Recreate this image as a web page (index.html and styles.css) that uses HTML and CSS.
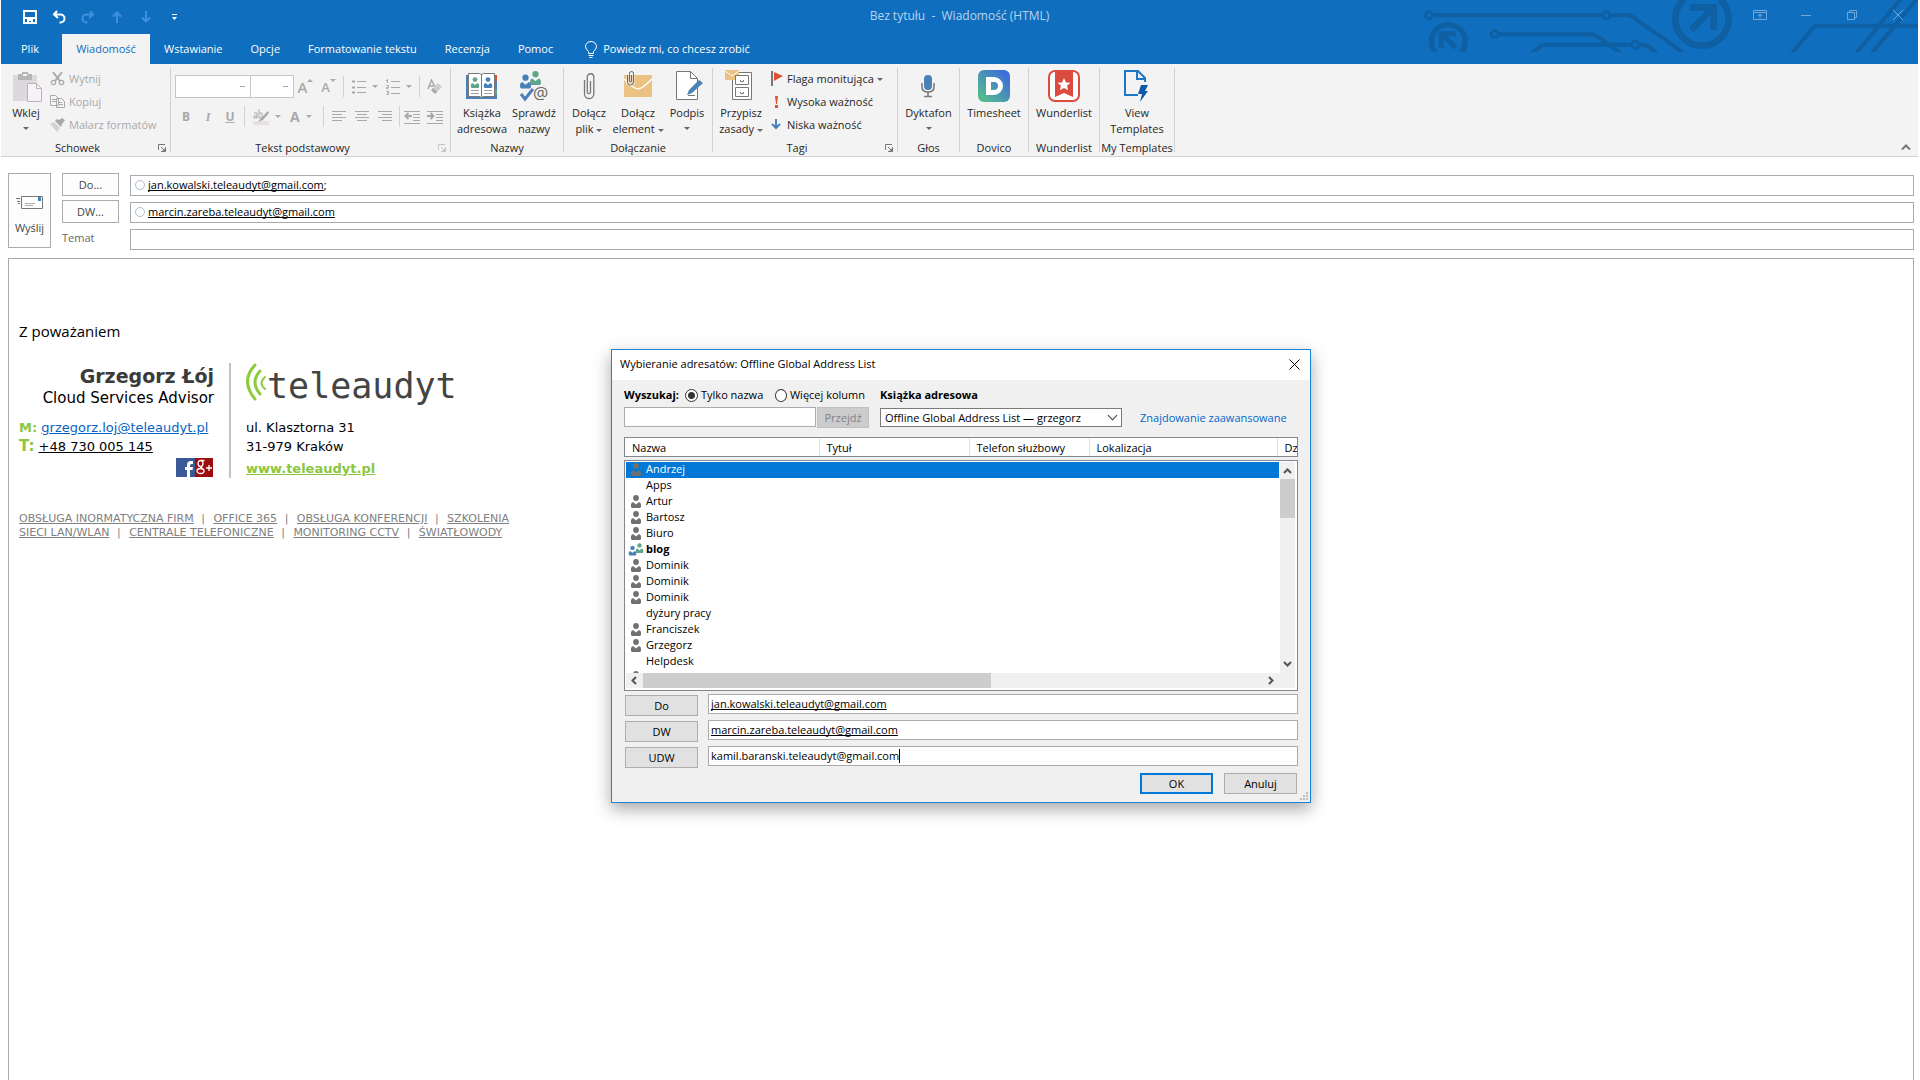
FILE: index.html
```html
<!DOCTYPE html>
<html lang="pl">
<head>
  <meta charset="UTF-8">
  <title>Bez tytułu - Wiadomość (HTML)</title>
  <link rel="stylesheet" href="styles.css">
</head>
<body>

  <!-- shared icons -->
  <svg class="sprite" aria-hidden="true">
    <symbol id="person" viewBox="0 0 12 13">
      <circle cx="6" cy="3" r="2.900"/>
      <path d="M1 12V9.500Q1 7.500 3 7L6 9.500 9 7Q11 7.500 11 9.500V12L10 13H2z"/>
    </symbol>
    <symbol id="launcher" viewBox="0 0 8 8">
      <path d="M.5 6V.5H7M3 3l3 3M7.500 3v4.500H3" fill="none" stroke="currentColor"/>
      <path d="M4 7.500h3.500V4z" fill="currentColor"/>
    </symbol>
  </svg>

  <header class="window-head">
    <svg class="circuit" viewBox="0 0 1500 192" width="500" height="64" aria-hidden="true">
      <g transform="translate(-54 0)" fill="none" stroke="#0f5fa3" stroke-width="12">
        <path d="M97 46H605M632 46H685Q692 46 700 52L850 158M297 103H575Q582 103 590 108L660 158M395 160L422 139Q430 134 440 134H692M720 134H730Q738 134 746 140L772 160"/>
        <path d="M1175 160L1240 83Q1246 77 1254 77H1560M1368 160L1502 -2M1415 160L1550 -2"/>
        <circle cx="87" cy="46" r="10.500" stroke-width="9"/>
        <circle cx="619" cy="46" r="10.500" stroke-width="9"/>
        <circle cx="284" cy="102" r="10.500" stroke-width="9"/>
        <circle cx="706" cy="134" r="10.500" stroke-width="9"/>
        <path d="M108 160A51 51 0 1 1 182 160" stroke-width="16"/>
        <path d="M167 101H124V145M126 103L167 143" stroke-width="15"/>
        <path d="M852 -2A80 80 0 1 0 960 -2" stroke-width="20"/>
        <path d="M870 22H941V90M938 25L874 90" stroke-width="20"/>
      </g>
      <path d="M0 156h1500v36H0z" fill="#106ebe"/>
    </svg>

    <div class="titlebar">
      <div class="quick-access">
        <button type="button" aria-label="Zapisz"><svg width="14" height="14" fill="none" stroke="#fff" stroke-width="2"><path d="M1 1h12v12H1zM1 8h12M5 13v-3h4v3"/></svg></button>
        <button type="button" aria-label="Cofnij"><svg width="14" height="14" fill="none" stroke="#fff" stroke-width="2"><path d="M5 1L2 4.500 6 8M2 4.500h6.500a4 4 0 0 1 0 8H7.500"/></svg></button>
        <button type="button" aria-label="Ponów" disabled><svg width="14" height="14" fill="none" stroke="#3f90dc" stroke-width="2"><path d="M9 1l3 3.500L8 8M12 4.500H5.500a4 4 0 0 0 0 8H6.500"/></svg></button>
        <button type="button" aria-label="Poprzedni" disabled><svg width="10" height="12" fill="none" stroke="#3f90dc" stroke-width="2"><path d="M5 12V2M1 5.500l4-4 4 4"/></svg></button>
        <button type="button" aria-label="Następny" disabled><svg width="10" height="12" fill="none" stroke="#3f90dc" stroke-width="2"><path d="M5 0v10M1 6.500l4 4 4-4"/></svg></button>
        <button type="button" aria-label="Dostosuj"><svg width="7" height="6" fill="#fff"><path d="M1 0h5v1H1zM1 3h5L3.500 6z"/></svg></button>
      </div>
      <div class="title">Bez tytułu &nbsp;-&nbsp; Wiadomość (HTML)</div>
      <div class="window-buttons">
        <button type="button" aria-label="Opcje wstążki"><svg width="14" height="12" fill="none" stroke="#6fa9dc"><path d="M.5 1.500h13v9H.5zM.5 3.500h13M7 9V5M5 7l2-2 2 2"/></svg></button>
        <button type="button" aria-label="Minimalizuj"><svg width="10" height="10" stroke="#6fa9dc"><path d="M0 5.500h10"/></svg></button>
        <button type="button" aria-label="Przywróć"><svg width="10" height="10" fill="none" stroke="#6fa9dc"><path d="M.5 2.500h7v7h-7zM2.500 2.500v-2h7v7h-2"/></svg></button>
        <button type="button" aria-label="Zamknij okno"><svg width="10" height="10" stroke="#6fa9dc"><path d="M0 0l10 10M10 0L0 10"/></svg></button>
      </div>
    </div>

    <nav class="tabs">
      <a href="#" class="tab file">Plik</a>
      <a href="#" class="tab active">Wiadomość</a>
      <a href="#" class="tab">Wstawianie</a>
      <a href="#" class="tab">Opcje</a>
      <a href="#" class="tab">Formatowanie tekstu</a>
      <a href="#" class="tab">Recenzja</a>
      <a href="#" class="tab">Pomoc</a>
      <a href="#" class="tab tell-me">
        <svg width="12" height="17" fill="none" stroke="#fff"><path d="M3.500 12.500V10.500Q.5 8 .5 5.500a5.500 5 0 0 1 11 0Q11.500 8 8.500 10.500V12.500zM3.500 14.500h5M4.500 16.500h3"/></svg>
        Powiedz mi, co chcesz zrobić
      </a>
    </nav>
  </header>

  <div class="ribbon">
    <section class="group clipboard">
      <div class="tools">
        <button type="button" class="big">
          <svg width="32" height="32"><path d="M3 5h24v26H3z" fill="#ddd8dd"/><path d="M8 4h4V2h6v2h4v6H8z" fill="#b5b5b5"/><path d="M13 4h4v2h-4z" fill="#f3f3f3"/><path d="M17.500 13.500h9l5 5v13h-14z" fill="#f7f2f7" stroke="#b9b4b9"/><path d="M26.500 13.500v5h5" fill="none" stroke="#b9b4b9"/></svg>
          <span>Wklej</span><i class="caret"></i>
        </button>
        <div class="stack">
          <button type="button" class="small" disabled><svg width="15" height="15" fill="none" stroke="#a9a9a9" stroke-width="2"><path d="M3 1l7 9M12 1L5 10"/><circle cx="3.500" cy="11.500" r="2.200" stroke-width="1.200"/><circle cx="11.500" cy="11.500" r="2.200" stroke-width="1.200"/></svg>Wytnij</button>
          <button type="button" class="small" disabled><svg width="15" height="15" fill="#f7f2f7" stroke="#a9a9a9"><path d="M.5 1.500h5l3 3v7h-8zM2 5.500h4M2 7.500h4M6.500 4.500h5l3 3v6h-8zM8 8.500h4M8 10.500h5"/></svg>Kopiuj</button>
          <button type="button" class="small" disabled><svg width="15" height="15"><path d="M0 7l4-2 6 6-3 4z" fill="#d5d0d5"/><path d="M5 4l6 6 1-3 3-4-3-2-3 2-2-1z" fill="#a9a9a9"/></svg>Malarz formatów</button>
        </div>
      </div>
      <div class="caption">Schowek<svg class="launch" width="8" height="8"><use href="#launcher"/></svg></div>
    </section>

    <section class="group text-group">
      <div class="tools format">
        <div class="format-row">
          <select class="font-name" aria-label="Czcionka" disabled><option></option></select>
          <select class="font-size" aria-label="Rozmiar" disabled><option></option></select>
          <button type="button" class="glyph" disabled>A<i class="caret up"></i></button>
          <button type="button" class="glyph smaller" disabled>A<i class="caret"></i></button>
          <i class="divider"></i>
          <button type="button" class="split" aria-label="Punktory" disabled><svg width="14" height="14" stroke="#a9a9a9"><path d="M5 1.500h9M5 7.500h9M5 12.500h9"/><path d="M0 1.500h3M0 7.500h3M0 12.500h3" stroke-width="2"/></svg><i class="caret"></i></button>
          <button type="button" class="split" aria-label="Numerowanie" disabled><svg width="14" height="16" stroke="#a9a9a9" fill="none"><path d="M5 2.500h9M5 8.500h9M5 14.500h9M1.500 0v4M0 1.500h1.500M.5 6.500h2v2h-2v1.500h2M.5 12.500h2v3h-2M1 14h1"/></svg><i class="caret"></i></button>
          <i class="divider gap"></i>
          <button type="button" class="glyph" aria-label="Wyczyść formatowanie" disabled><svg width="15" height="15"><path d="M1 10L4.500 1 8 8M2.500 7h4" fill="none" stroke="#a9a9a9" stroke-width="1.500"/><path d="M5 10l6-6 4 4-6 6z" fill="#d0cbd0"/><path d="M4 11l2-2 4 4-2 2z" fill="#a9a9a9"/></svg></button>
        </div>
        <div class="format-row">
          <button type="button" class="letter" disabled><b>B</b></button>
          <button type="button" class="letter" disabled><em>I</em></button>
          <button type="button" class="letter" disabled><b><u>U</u></b></button>
          <i class="divider"></i>
          <button type="button" class="split" aria-label="Kolor wyróżnienia" disabled><svg width="16" height="16"><path d="M0 12h16v4H0z" fill="#e6dfe6"/><path d="M1 4h3v5H1V7h3M6 0v9h3V4H6" fill="none" stroke="#a9a9a9"/><path d="M15 2L8 9l-3 4 5-2 6-7z" fill="#a9a9a9"/></svg><i class="caret"></i></button>
          <button type="button" class="split colour" disabled><b>A</b><i class="caret"></i></button>
          <i class="divider gap"></i>
          <button type="button" class="glyph" aria-label="Do lewej" disabled><svg width="14" height="11" stroke="#a9a9a9"><path d="M0 .5h14M0 3.500h10M0 6.500h14M0 9.500h10"/></svg></button>
          <button type="button" class="glyph" aria-label="Do środka" disabled><svg width="14" height="11" stroke="#a9a9a9"><path d="M0 .5h14M2 3.500h10M0 6.500h14M2 9.500h10"/></svg></button>
          <button type="button" class="glyph" aria-label="Do prawej" disabled><svg width="14" height="11" stroke="#a9a9a9"><path d="M0 .5h14M4 3.500h10M0 6.500h14M4 9.500h10"/></svg></button>
          <i class="divider"></i>
          <button type="button" class="glyph" aria-label="Zmniejsz wcięcie" disabled><svg width="16" height="14" stroke="#a9a9a9" fill="none"><path d="M0 1.500h16M9 4.500h7M9 7.500h7M9 10.500h7M0 13.500h16"/><path d="M8 6H2M4.500 3L1.500 6l3 3" stroke-width="2"/></svg></button>
          <button type="button" class="glyph" aria-label="Zwiększ wcięcie" disabled><svg width="16" height="14" stroke="#a9a9a9" fill="none"><path d="M0 1.500h16M9 4.500h7M9 7.500h7M9 10.500h7M0 13.500h16"/><path d="M0 6h6M3.500 3l3 3-3 3" stroke-width="2"/></svg></button>
        </div>
      </div>
      <div class="caption">Tekst podstawowy<svg class="launch faded" width="8" height="8"><use href="#launcher"/></svg></div>
    </section>

    <section class="group names">
      <div class="tools">
        <button type="button" class="big">
          <svg width="32" height="32"><path d="M0 5h31v24H0z" fill="#4a80b8"/><path d="M29 5h2v6h-2z" fill="#dd5234"/><path d="M29 19h2v6h-2z" fill="#5fa58b"/><path d="M2.500 3.500h11l2 1 2-1h11v23H18l-2.500 1-2.500-1H2.500zM15.500 4v23" fill="#fff" stroke="#777"/><use href="#person" x="4" y="7" width="10" height="11" fill="#5fa58b"/><use href="#person" x="17" y="7" width="10" height="11" fill="#4a80b8"/><path d="M5 20.500h8M5 23.500h8M18 20.500h8M18 23.500h8" stroke="#a0a0a0"/></svg>
          <span>Książka<br>adresowa</span>
        </button>
        <button type="button" class="big">
          <svg width="32" height="32"><use href="#person" x="11" y="1" width="13" height="14" fill="#5fa58b"/><use href="#person" x="1" y="4" width="13" height="15" fill="#4a80b8"/><path d="M3 24l4 5 8-10" fill="none" stroke="#4a80b8" stroke-width="3"/><text x="15" y="29" font-size="17" fill="#666">@</text></svg>
          <span>Sprawdź<br>nazwy</span>
        </button>
      </div>
      <div class="caption">Nazwy</div>
    </section>

    <section class="group attach">
      <div class="tools">
        <button type="button" class="big">
          <svg width="32" height="32" fill="none" stroke="#777" stroke-width="1.300"><path d="M17.500 11v11a1.600 1.600 0 0 1-3.200 0V7a3 3 0 0 1 6.500 0v17a4.500 4.500 0 0 1-9.300 0V10"/></svg>
          <span>Dołącz<br>plik <i class="caret"></i></span>
        </button>
        <button type="button" class="big">
          <svg width="32" height="32"><path d="M2 5h28v22H2z" fill="#eac282"/><path d="M2 9q10 10 14 10T30 9" fill="none" stroke="#fff" stroke-width="1.500"/><rect x="4" y="0" width="9" height="15" fill="#f3f3f3" opacity=".5"/><path d="M9.500 5v6a1 1 0 0 1-2 0V3.500a2 2 0 0 1 4 0V12a3 3 0 0 1-6 0V5" fill="none" stroke="#666"/></svg>
          <span>Dołącz<br>element <i class="caret"></i></span>
        </button>
        <button type="button" class="big">
          <svg width="32" height="32"><path d="M5.500 1.500h14l7 7v21h-21z" fill="#fff" stroke="#777"/><path d="M19.500 1.500v7h7" fill="none" stroke="#777"/><path d="M17 25.500h7" stroke="#777"/><path d="M16 25l2-5L28 10l4 3-11 10z" fill="#4a80b8"/></svg>
          <span>Podpis</span><i class="caret"></i>
        </button>
      </div>
      <div class="caption">Dołączanie</div>
    </section>

    <section class="group tags">
      <div class="tools">
        <button type="button" class="big">
          <svg width="32" height="32"><path d="M7.500 2.500h19v27h-19z" fill="#fff" stroke="#777"/><path d="M0 0h14v10H0z" fill="#eac282"/><path d="M0 1l7 5 7-5" fill="none" stroke="#fff"/><path d="M10.500 5.500h13v9h-13zM10.500 17.500h13v9h-13zM15.500 10v1.500h3V10M15.500 22v1.500h3V22" fill="#fff" stroke="#777"/></svg>
          <span>Przypisz<br>zasady <i class="caret"></i></span>
        </button>
        <div class="stack">
          <button type="button" class="small"><svg width="12" height="15"><path d="M1 0v15" stroke="#777" stroke-width="2"/><path d="M3 1l9 4-9 5z" fill="#dd5234"/></svg><span>Flaga monitująca <i class="caret"></i></span></button>
          <button type="button" class="small"><svg width="12" height="15" fill="#dd5234"><path d="M4 2h3l-1 8H5zM4 11h3v3H4z"/></svg>Wysoka ważność</button>
          <button type="button" class="small"><svg width="12" height="15" fill="none" stroke="#4a80b8" stroke-width="2"><path d="M5 2v9M1 7l4 4 4-4"/></svg>Niska ważność</button>
        </div>
      </div>
      <div class="caption">Tagi<svg class="launch" width="8" height="8"><use href="#launcher"/></svg></div>
    </section>

    <section class="group voice">
      <div class="tools">
        <button type="button" class="big">
          <svg width="32" height="32"><rect x="11" y="5" width="8" height="15" rx="4" fill="#4a80b8"/><path d="M9 13v4q0 5 6 5t6-5v-4M15 22v4M11 26.500h8" fill="none" stroke="#777" stroke-width="1.500"/></svg>
          <span>Dyktafon</span><i class="caret"></i>
        </button>
      </div>
      <div class="caption">Głos</div>
    </section>

    <section class="group dovico">
      <div class="tools">
        <button type="button" class="big">
          <svg width="32" height="32"><defs><linearGradient id="dv" x1="0" y1="1" x2="1" y2="0"><stop offset=".15" stop-color="#53b892"/><stop offset=".85" stop-color="#3f6fd8"/></linearGradient></defs><rect width="32" height="32" rx="6" fill="url(#dv)"/><path d="M8 7h8a9 9 0 0 1 0 18H8zM13 12v8h3a4 4 0 0 0 0-8z" fill="#fff" fill-rule="evenodd"/></svg>
          <span>Timesheet</span>
        </button>
      </div>
      <div class="caption">Dovico</div>
    </section>

    <section class="group wunder">
      <div class="tools">
        <button type="button" class="big">
          <svg width="32" height="32"><rect x="1" y="1" width="30" height="30" rx="6" fill="#fff" stroke="#db4c3f" stroke-width="2"/><path d="M7 2h18v25l-9-4-9 4z" fill="#db4c3f"/><path d="M16 8l2 4.500 4.500.3-3.500 3 1.200 4.500L16 18l-4.200 2.300 1.200-4.500-3.500-3 4.500-.3z" fill="#fff"/></svg>
          <span>Wunderlist</span>
        </button>
      </div>
      <div class="caption">Wunderlist</div>
    </section>

    <section class="group templates">
      <div class="tools">
        <button type="button" class="big">
          <svg width="32" height="32"><path d="M17 25H4V1h13l7 7v4M16 1v8h8" fill="none" stroke="#1e78c8" stroke-width="2"/><path d="M20 15h7l-3 6h3l-8 11 2-8h-4z" fill="#0a5aa5"/></svg>
          <span>View<br>Templates</span>
        </button>
      </div>
      <div class="caption">My Templates</div>
    </section>

    <button type="button" class="collapse" aria-label="Zwiń wstążkę"><svg width="10" height="6" fill="none" stroke="#777" stroke-width="2"><path d="M1 5.500l4-4 4 4"/></svg></button>
  </div>

  <main class="message">
    <form class="envelope">
      <button type="button" class="send">
        <svg width="28" height="15" fill="none"><path d="M5.500 1.500h21v12h-21z" fill="#fff" stroke="#777"/><path d="M22 2h3v4h-3z" fill="#4a80b8"/><path d="M9 8.500h10M9 10.500h8" stroke="#aaa"/><path d="M0 3.500h4M1 6.500h3M2 8.500h2" stroke="#777"/></svg>
        Wyślij
      </button>
      <div class="fields">
        <button type="button" class="pick">Do...</button>
        <div class="field"><i class="presence"></i><input type="text" class="address" aria-label="Do" value="jan.kowalski.teleaudyt@gmail.com">;</div>
        <button type="button" class="pick">DW...</button>
        <div class="field"><i class="presence"></i><input type="text" class="address" aria-label="DW" value="marcin.zareba.teleaudyt@gmail.com"></div>
        <label for="subject">Temat</label>
        <input type="text" id="subject" class="field">
      </div>
    </form>

    <article class="mail-body">
      <p class="regards">Z poważaniem</p>
      <div class="signature">
        <div class="who">
          <strong class="name">Grzegorz Łój</strong>
          <span class="role">Cloud Services Advisor</span>
          <p class="contact"><b>M:</b> <a href="#">grzegorz.loj@teleaudyt.pl</a></p>
          <p class="contact phone"><b>T:</b> <a href="#">+48 730 005 145</a></p>
          <div class="social">
            <a href="#" aria-label="Facebook"><svg width="19" height="19"><path d="M0 0h19v19H0z" fill="#3b5998"/><path d="M11 19v-7H9V9h2V7q0-4 4-4h2v3h-1.500q-1.500 0-1.500 1.500V9h3l-.5 3H14v7z" fill="#fff"/></svg></a>
            <a href="#" aria-label="Google+"><svg width="18" height="19"><path d="M0 0h18v19H0z" fill="#9c0d10"/><g fill="none" stroke="#fff" stroke-width="1.300"><ellipse cx="5.500" cy="5.500" rx="2.500" ry="3"/><ellipse cx="5.500" cy="13" rx="3.500" ry="2.500"/><path d="M6 2.500h3.500M5.500 8.500l2 2.500M11 10h6M14 7v6"/></g></svg></a>
          </div>
        </div>
        <div class="company">
          <div class="logo">
            <svg width="21" height="38" fill="none" stroke="#8ecb3c" stroke-linecap="round"><path d="M9 2Q-6 18 9 36" stroke-width="3"/><path d="M14 8Q4 19 14 31" stroke-width="3"/><path d="M19 14Q12 20 19 26" stroke-width="2"/></svg>
            <span>teleaudyt</span>
          </div>
          <p>ul. Klasztorna 31<br>31-979 Kraków</p>
          <a href="#">www.teleaudyt.pl</a>
        </div>
      </div>
      <p class="services">
        <a href="#">OBSŁUGA INORMATYCZNA FIRM</a> <i>|</i> <a href="#">OFFICE 365</a> <i>|</i> <a href="#">OBSŁUGA KONFERENCJI</a> <i>|</i> <a href="#">SZKOLENIA</a><br>
        <a href="#">SIECI LAN/WLAN</a> <i>|</i> <a href="#">CENTRALE TELEFONICZNE</a> <i>|</i> <a href="#">MONITORING CCTV</a> <i>|</i> <a href="#">ŚWIATŁOWODY</a>
      </p>
    </article>
  </main>

  <div class="dialog" role="dialog" aria-labelledby="dialog-title">
    <div class="dialog-title">
      <span id="dialog-title">Wybieranie adresatów: Offline Global Address List</span>
      <button type="button" aria-label="Zamknij"><svg width="11" height="11" stroke="#000"><path d="M.5 .5l10 10M10.500 .5l-10 10"/></svg></button>
    </div>

    <form class="dialog-content">
      <div class="search">
        <div class="search-by">
          <div class="choice-row">
            <b>Wyszukaj:</b>
            <label><input type="radio" name="scope" checked>Tylko nazwa</label>
            <label><input type="radio" name="scope">Więcej kolumn</label>
          </div>
          <div class="search-row">
            <input type="text" class="box" aria-label="Wyszukaj">
            <button type="button" class="go" disabled>Przejdź</button>
          </div>
        </div>
        <div class="book">
          <label for="book"><b>Książka adresowa</b></label>
          <select id="book"><option>Offline Global Address List — grzegorz</option></select>
        </div>
        <a href="#" class="advanced">Znajdowanie zaawansowane</a>
      </div>

      <div class="columns">
        <table>
          <tr><th class="c-name">Nazwa</th><th class="c-title">Tytuł</th><th class="c-phone">Telefon służbowy</th><th class="c-place">Lokalizacja</th><th>Dz</th></tr>
        </table>
      </div>

      <div class="list">
        <div class="rows">
          <table>
            <tr class="selected"><td><svg><use href="#person"/></svg></td><td>Andrzej</td></tr>
            <tr><td></td><td>Apps</td></tr>
            <tr><td><svg><use href="#person"/></svg></td><td>Artur</td></tr>
            <tr><td><svg><use href="#person"/></svg></td><td>Bartosz</td></tr>
            <tr><td><svg><use href="#person"/></svg></td><td>Biuro</td></tr>
            <tr><td><svg class="people"><use href="#person" x="7" y="0" width="9" height="10" fill="#5fa58b"/><use href="#person" x="0" y="2" width="9" height="11" fill="#4a80b8"/></svg></td><td><b>blog</b></td></tr>
            <tr><td><svg><use href="#person"/></svg></td><td>Dominik</td></tr>
            <tr><td><svg><use href="#person"/></svg></td><td>Dominik</td></tr>
            <tr><td><svg><use href="#person"/></svg></td><td>Dominik</td></tr>
            <tr><td></td><td>dyżury pracy</td></tr>
            <tr><td><svg><use href="#person"/></svg></td><td>Franciszek</td></tr>
            <tr><td><svg><use href="#person"/></svg></td><td>Grzegorz</td></tr>
            <tr><td></td><td>Helpdesk</td></tr>
            <tr><td><svg><use href="#person"/></svg></td><td></td></tr>
          </table>
        </div>
        <div class="scroll vertical">
          <svg width="15" height="17"><path d="M4 11l3.500-3.500L11 11" fill="none" stroke="#555" stroke-width="2"/></svg>
          <span class="thumb"></span>
          <svg width="15" height="17"><path d="M4 6l3.500 3.500L11 6" fill="none" stroke="#555" stroke-width="2"/></svg>
        </div>
        <div class="scroll horizontal">
          <svg width="17" height="15"><path d="M10 4L6.500 7.500 10 11" fill="none" stroke="#555" stroke-width="2"/></svg>
          <span class="thumb"></span>
          <svg width="17" height="15"><path d="M7 4l3.500 3.500L7 11" fill="none" stroke="#555" stroke-width="2"/></svg>
        </div>
      </div>

      <div class="recipients">
        <button type="button">Do</button>
        <div class="box"><input type="text" class="address" aria-label="Do" value="jan.kowalski.teleaudyt@gmail.com"></div>
        <button type="button">DW</button>
        <div class="box"><input type="text" class="address" aria-label="DW" value="marcin.zareba.teleaudyt@gmail.com"></div>
        <button type="button">UDW</button>
        <div class="box"><input type="text" class="address plain" aria-label="UDW" value="kamil.baranski.teleaudyt@gmail.com"><i class="cursor"></i></div>
      </div>

      <div class="actions">
        <button type="button" class="default">OK</button>
        <button type="button">Anuluj</button>
      </div>
    </form>
    <svg class="grip" width="8" height="8" fill="#bfbfbf"><path d="M6 0h2v2H6zM3 3h2v2H3zM6 3h2v2H6zM0 6h2v2H0zM3 6h2v2H3zM6 6h2v2H6z"/></svg>
  </div>

</body>
</html>
```
FILE: styles.css
```css
:root {
  --blue: #106ebe;
  --accent: #0078d7;
  --ribbon-bg: #f3f3f3;
  --line: #d2d2d2;
  --field-line: #ababab;
  --text: #262626;
  --disabled: #a9a9a9;
  --green: #8cc63f;
}
* {
  box-sizing: border-box;
}
body {
  margin: 0;
  padding: 0 2px 0 1px;
  height: 100vh;
  display: flex;
  flex-direction: column;
  overflow: hidden;
  position: relative;
  background: #fff;
  color: var(--text);
  font: 11px/16px "Open Sans", "Noto Sans", sans-serif;
}
button, input, select {
  font: inherit;
  color: inherit;
  margin: 0;
}
button {
  padding: 0;
  border: none;
  background: none;
}
p {
  margin: 0;
}
i {
  font-style: normal;
}
svg {
  display: block;
  flex: none;
}
.sprite {
  position: absolute;
  width: 0;
  height: 0;
}
.caret {
  display: inline-block;
  vertical-align: middle;
  border: 3px solid transparent;
  border-top-color: #666;
  border-bottom: none;
}
.caret.up {
  border-top: none;
  border-bottom: 3px solid var(--disabled);
}

/* title bar and tabs */
.window-head {
  position: relative;
  background: var(--blue);
  color: #fff;
}
.circuit {
  position: absolute;
  top: 0;
  right: 0;
}
.titlebar {
  position: relative;
  height: 34px;
  display: grid;
  grid-template-columns: 1fr auto 1fr;
}
.quick-access {
  display: flex;
  padding-left: 14px;
}
.quick-access button {
  width: 29px;
  display: flex;
  align-items: center;
  justify-content: center;
}
.title {
  color: #b7d4ee;
  font-size: 12px;
  line-height: 32px;
}
.window-buttons {
  display: flex;
  justify-content: flex-end;
  gap: 30px;
  padding: 0 12px 4px 0;
}
.window-buttons button {
  width: 16px;
  display: flex;
  align-items: center;
  justify-content: center;
}
.tabs {
  position: relative;
  display: flex;
  height: 30px;
}
.tab {
  padding: 0 14px;
  color: #fff;
  text-decoration: none;
  line-height: 30px;
}
.tab.file {
  width: 61px;
  padding-left: 20px;
}
.tab.active {
  width: 88px;
  padding: 0;
  text-align: center;
  background: var(--ribbon-bg);
  color: var(--blue);
}
.tab.tell-me {
  display: flex;
  align-items: center;
  gap: 6px;
  padding-left: 18px;
}

/* ribbon */
.ribbon {
  position: relative;
  display: flex;
  height: 93px;
  padding: 4px 0;
  background: var(--ribbon-bg);
  border-bottom: 1px solid var(--line);
}
.group {
  display: flex;
  flex-direction: column;
  flex: none;
  border-right: 1px solid var(--line);
}
.clipboard { width: 170px; }
.text-group { width: 280px; }
.names { width: 113px; }
.attach { width: 149px; }
.tags { width: 185px; }
.voice { width: 62px; }
.dovico { width: 69px; }
.wunder { width: 71px; }
.templates { width: 75px; }
.tools {
  flex: 1;
  display: flex;
  justify-content: center;
}
.clipboard .tools, .tags .tools {
  justify-content: flex-start;
}
.names .tools {
  padding-left: 2px;
}
.caption {
  position: relative;
  height: 12px;
  line-height: 16px;
  text-align: center;
}
.caption:has(.launch) {
  padding-right: 16px;
}
.launch {
  position: absolute;
  right: 4px;
  bottom: 0;
  color: #777;
}
.launch.faded {
  color: #c4c4c4;
}
.big {
  display: flex;
  flex-direction: column;
  align-items: center;
  padding-top: 2px;
  white-space: nowrap;
}
.big svg {
  margin-bottom: 3px;
}
.big > .caret {
  margin-top: 6px;
}
.clipboard .big {
  width: 38px;
  margin-left: 6px;
}
.names .big { width: 52px; }
.attach .big { width: 49px; }
.tags .big { width: 56px; }
.stack {
  display: flex;
  flex-direction: column;
}
.small {
  display: flex;
  align-items: center;
  gap: 4px;
  height: 23px;
  margin-left: 5px;
  padding-bottom: 2px;
  white-space: nowrap;
}
.tags .small {
  margin-left: 2px;
}
.small:disabled {
  color: var(--disabled);
}
.format {
  flex-direction: column;
  justify-content: flex-start;
  padding: 7px 0 0 4px;
  gap: 7px;
}
.format-row {
  display: flex;
  align-items: center;
  height: 23px;
  color: var(--disabled);
}
.format-row select {
  height: 23px;
  border: 1px solid #c6c6c6;
  border-radius: 0;
  appearance: none;
  background: linear-gradient(var(--disabled), var(--disabled)) no-repeat right 5px center / 5px 1px #fff;
  opacity: 1;
}
.font-name {
  width: 76px;
}
.font-size {
  width: 44px;
  margin-left: -1px;
}
.glyph, .letter, .split {
  display: flex;
  align-items: center;
  justify-content: center;
  height: 22px;
}
.glyph {
  width: 23px;
  font-size: 15px;
  font-weight: 600;
}
.glyph.smaller {
  font-size: 13px;
}
.glyph .caret {
  margin-bottom: 12px;
}
.letter {
  width: 22px;
  font-size: 12px;
}
.letter em {
  font-family: "Liberation Serif", serif;
  font-weight: bold;
}
.split {
  width: 34px;
  gap: 6px;
  padding-left: 8px;
  justify-content: flex-start;
}
.format .caret:not(.up) {
  border-top-color: var(--disabled);
}
.split.colour {
  width: 37px;
  padding-left: 11px;
  font-size: 14px;
}
.divider {
  width: 1px;
  height: 21px;
  margin-left: 3px;
  background: var(--line);
}
.divider.gap {
  margin: 0 3px 0 7px;
}
.collapse {
  margin: auto 7px 2px auto;
}

/* recipients and subject */
.message {
  flex: 1;
  display: flex;
  flex-direction: column;
  padding: 16px 4px 0 7px;
}
.envelope {
  display: flex;
  gap: 11px;
}
.send {
  width: 43px;
  height: 75px;
  display: flex;
  flex-direction: column;
  align-items: center;
  gap: 10px;
  padding-top: 21px;
  border: 1px solid var(--field-line);
  background: #fdfdfd;
  color: #444;
}
.fields {
  flex: 1;
  display: grid;
  grid-template-columns: 57px 1fr;
  gap: 4px 11px;
}
.pick {
  height: 23px;
  border: 1px solid var(--field-line);
  background: #fdfdfd;
  color: #444;
}
.field {
  display: flex;
  align-items: center;
  height: 21px;
  margin-top: 2px;
  padding: 0 4px 2px;
  border: 1px solid var(--field-line);
  background: #fff;
  color: #000;
}
.fields label {
  color: #666;
  line-height: 22px;
}
.presence {
  width: 10px;
  height: 10px;
  margin-right: 3px;
  border: 1px solid #a9bfd3;
  border-radius: 50%;
}
.address {
  field-sizing: content;
  height: 16px;
  padding: 0;
  border: none;
  outline: none;
  background: none;
  text-decoration: underline;
  text-decoration-skip-ink: none;
}
.address.plain {
  text-decoration: none;
}

/* mail body */
.mail-body {
  flex: 1;
  margin-top: 8px;
  padding: 61px 10px 0;
  border: 1px solid var(--field-line);
  border-bottom: none;
  color: #000;
  font: 13px/19px "DejaVu Sans", sans-serif;
}
.regards {
  font: 15px/22px "Open Sans", sans-serif;
}
.signature {
  display: flex;
  margin-top: 21px;
}
.who {
  display: flex;
  flex-direction: column;
  align-items: flex-end;
  width: 212px;
  height: 115px;
  padding: 1px 15px 0 0;
  border-right: 2px solid #c4c4c4;
  white-space: nowrap;
}
.name {
  color: #3b3b3b;
  font-size: 19px;
  line-height: 25px;
}
.role {
  font-size: 15px;
}
.contact {
  align-self: stretch;
  margin-top: 10px;
}
.contact.phone {
  margin-top: 0;
}
.contact b {
  color: var(--green);
}
.contact.phone b {
  font-size: 15px;
}
.contact a {
  color: #0563c1;
}
.contact.phone a {
  color: #000;
}
.social {
  display: flex;
  margin: 2px 1px 0 0;
}
.company {
  padding-left: 15px;
}
.logo {
  display: flex;
  height: 55px;
  color: #444;
  font: 35px/46px "DejaVu Sans Mono", monospace;
}
.company a {
  display: block;
  margin-top: 3px;
  color: var(--green);
  font-weight: bold;
}
.services {
  margin-top: 34px;
  color: #808080;
  font-size: 11px;
  line-height: 14px;
}
.services a {
  color: inherit;
}
.services i {
  margin: 0 5px 0 4px;
}

/* address book dialog */
.dialog {
  position: absolute;
  top: 349px;
  left: 611px;
  width: 700px;
  border: 1px solid #1883d7;
  background: #f0f0f0;
  color: #000;
  box-shadow: 0 6px 16px rgba(0, 0, 0, .35);
}
.dialog-title {
  display: flex;
  align-items: center;
  justify-content: space-between;
  height: 30px;
  padding: 0 10px 2px 8px;
  background: #fff;
}
.dialog-content {
  padding: 7px 12px 8px;
}
.search {
  display: flex;
}
.search-by {
  width: 245px;
}
.choice-row, .choice-row label {
  display: flex;
  align-items: center;
}
.choice-row b {
  width: 61px;
}
.choice-row label {
  width: 90px;
  white-space: nowrap;
}
.choice-row input {
  appearance: none;
  width: 13px;
  height: 13px;
  margin-right: 3px;
  border: 1px solid #333;
  border-radius: 50%;
  background: #fff;
}
.choice-row input:checked {
  background: radial-gradient(#333 0 3px, #fff 4px);
}
.search-row {
  display: flex;
  gap: 1px;
  margin-top: 4px;
}
.box {
  height: 20px;
  border: 1px solid var(--field-line);
  background: #fff;
}
.search-row .box {
  flex: 1;
}
.go {
  width: 52px;
  height: 21px;
  border: 1px solid #bfbfbf;
  background: #ccc;
  color: #838383;
}
.book {
  position: relative;
  display: flex;
  flex-direction: column;
  width: 242px;
  margin-left: 11px;
}
.book select {
  height: 19px;
  margin-top: 5px;
  padding: 0 4px;
  appearance: none;
  border: 1px solid #7a7a7a;
  border-radius: 0;
  background: #fff;
}
.book::after {
  content: "";
  position: absolute;
  right: 6px;
  bottom: 9px;
  width: 6px;
  height: 6px;
  border: solid #444;
  border-width: 0 1px 1px 0;
  transform: rotate(45deg);
}
.advanced {
  margin: 23px 0 0 18px;
  color: #0066cc;
  text-decoration: none;
}
.columns {
  height: 20px;
  margin-top: 9px;
  overflow: hidden;
  border: 1px solid #828790;
  background: #fff;
}
table {
  width: 100%;
  table-layout: fixed;
  border-collapse: collapse;
}
th {
  height: 18px;
  padding: 2px 0 0 7px;
  border-left: 1px solid #e0e0e0;
  font-weight: normal;
  text-align: left;
  line-height: 16px;
}
th:first-child {
  border-left: none;
}
.c-name { width: 194px; }
.c-title { width: 150px; }
.c-phone { width: 120px; }
.c-place { width: 188px; }
.list {
  display: grid;
  grid-template-columns: 1fr 15px;
  grid-template-rows: 211px 15px;
  column-gap: 1px;
  height: 231px;
  margin-top: 3px;
  padding: 1px 2px 1px 1px;
  border: 1px solid #828790;
  background: #fff;
}
.rows {
  overflow: hidden;
}
.rows td {
  height: 16px;
  padding: 0;
  line-height: 14px;
  vertical-align: top;
}
.rows td:first-child {
  width: 20px;
  padding: 1px 0 0 4px;
}
.rows svg {
  width: 12px;
  height: 13px;
  fill: #707070;
}
.rows svg.people {
  width: 16px;
  margin-left: -2px;
}
.rows .selected {
  background: var(--accent);
  color: #fff;
}
.scroll {
  display: flex;
  background: #f0f0f0;
}
.scroll .thumb {
  background: #cdcdcd;
}
.vertical {
  flex-direction: column;
}
.vertical .thumb {
  height: 39px;
  margin-bottom: auto;
}
.horizontal {
  grid-column: 1 / 3;
  padding-right: 16px;
}
.horizontal .thumb {
  width: 348px;
  margin-right: auto;
}
.recipients {
  display: grid;
  grid-template-columns: 73px 1fr;
  gap: 6px 10px;
  margin-top: 3px;
  padding-left: 1px;
}
.recipients button, .actions button {
  height: 21px;
  border: 1px solid #adadad;
  background: #e1e1e1;
}
.recipients button {
  margin-top: 1px;
  margin-bottom: -2px;
}
.recipients .box {
  display: flex;
  align-items: center;
  padding-left: 2px;
}
.cursor {
  width: 1px;
  height: 14px;
  background: #000;
}
.actions {
  display: flex;
  justify-content: flex-end;
  gap: 11px;
  margin-top: 7px;
  padding-right: 1px;
}
.actions button {
  width: 73px;
}
.actions .default {
  border: 2px solid var(--accent);
}
.grip {
  position: absolute;
  right: 2px;
  bottom: 2px;
}
```
